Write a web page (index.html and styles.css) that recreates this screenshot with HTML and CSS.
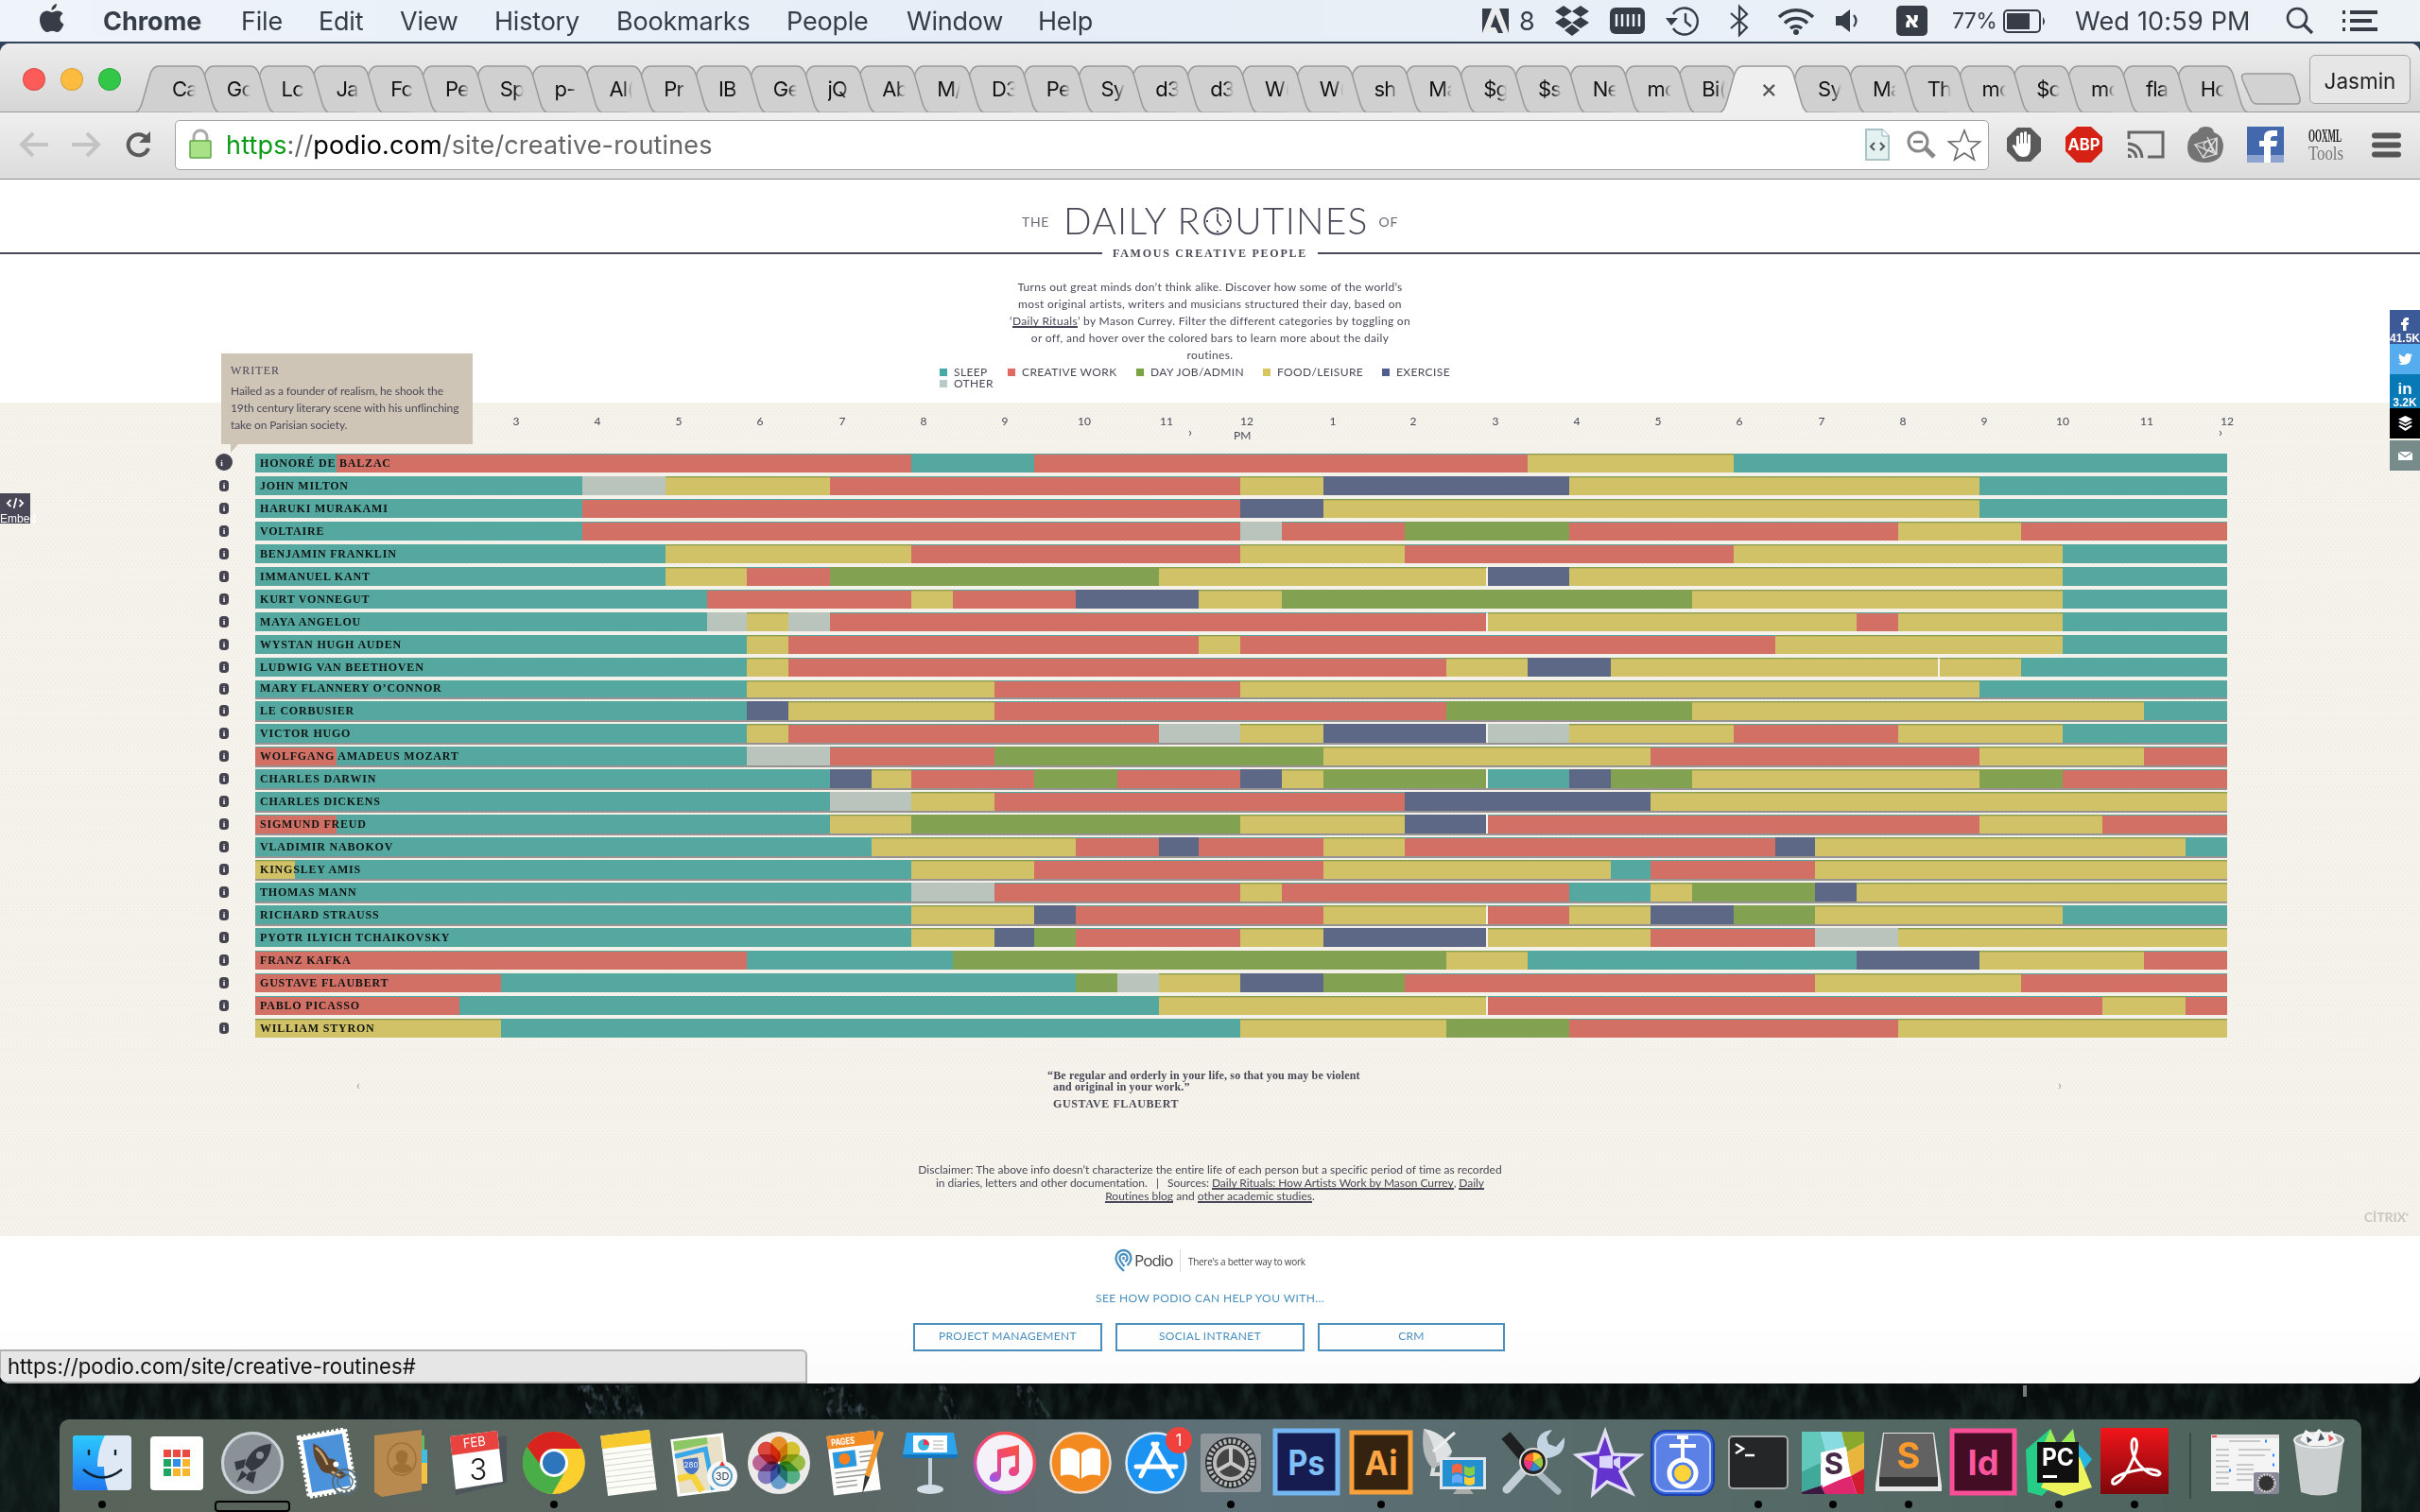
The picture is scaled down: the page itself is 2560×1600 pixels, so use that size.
FILE: index.html
```html
<!DOCTYPE html>
<html lang="en">
<head>
<meta charset="utf-8">
<title>The Daily Routines of Famous Creative People</title>
<link rel="stylesheet" href="styles.css">
</head>
<body>
<div class="desktop">
  <svg class="forest" viewBox="0 0 2560 136" preserveAspectRatio="none">
    <filter id="trees" x="0" y="0" width="100%" height="100%" color-interpolation-filters="sRGB"><feTurbulence type="fractalNoise" baseFrequency=".07 .03" numOctaves="4" seed="7"/><feColorMatrix values="0 0 0 0 .1  0 0 0 0 .16  0 0 0 0 .14  1.800 0 0 0 -.7"/></filter>
    <filter id="rocks" x="0" y="0" width="100%" height="100%" color-interpolation-filters="sRGB"><feTurbulence type="fractalNoise" baseFrequency=".16 .09" numOctaves="3" seed="3" result="n"/><feColorMatrix in="n" values="0 0 0 0 .28  0 0 0 0 .34  0 0 0 0 .38  2.500 0 0 0 -1.250" result="c"/><feComposite in="c" in2="SourceAlpha" operator="in"/></filter>
    <rect width="2560" height="136" filter="url(#trees)"/>
    <path d="M610 2h60l20 48-20 20h-30zM862 6l30-4 80 76h-70zM985 2h14l42 76h-14zM1070 2h20l50 76h-24z" filter="url(#rocks)"/>
    <path d="M2140 2h4v12h-4z" fill="#777b7c"/>
  </svg>
  <header class="menubar">
    <svg class="apple" viewBox="0 0 26 32"><path d="M18 0c.3 3-2.600 6.500-5.500 6.600C12 3.800 15 .5 18 0zM13 9c1.500 0 3.500-1.700 6-1.600 2.300.1 4.300 1.200 5.500 3-4.500 3-3.800 9 1 11-1.200 3.500-4 8.500-7 8.600-2 0-2.800-1.200-5.300-1.200S10 30 8 30C4 30 0 23 0 17c0-6 3.800-9.500 7.500-9.500C10 7.500 11.500 9 13 9z"/></svg>
    <nav class="menus"><b>Chrome</b><span>File</span><span>Edit</span><span>View</span><span>History</span><span>Bookmarks</span><span>People</span><span>Window</span><span>Help</span></nav>
    <div class="status">
      <svg width="28" height="26" viewBox="0 0 28 26"><path d="M0 0h28v26H0z"/><path d="M10 0h8l10 26h-6l-8-18-5 12h5l3 6H0z" fill="#fff" opacity=".9"/><path d="M14 6l7 20h-4l-2-6H9z"/></svg>
      <span class="s-num">8</span>
      <svg width="36" height="32" viewBox="0 0 36 32"><path d="M9 0l9 6-9 6-9-6zM27 0l9 6-9 6-9-6zM9 12l9 6-9 6-9-6zM27 12l9 6-9 6-9-6zM18 20l8 6-8 6-8-6z"/></svg>
      <svg width="37" height="28" viewBox="0 0 37 28"><rect width="37" height="28" rx="6"/><path d="M7 7v13M13 7v13M19 7v13M25 7v13M31 7v13" stroke="#e9eff6" stroke-width="2.500"/></svg>
      <svg width="38" height="32" viewBox="0 0 38 32"><path d="M8 9a14 14 0 1 1 0 15M21 8v9l6 5" fill="none" stroke="#363d47" stroke-width="2.400"/><path d="M0 13h13l-7 8z"/></svg>
      <svg width="20" height="32" viewBox="0 0 20 32"><path d="M1 8l17 15-8 8V1l8 8L1 24" fill="none" stroke="#363d47" stroke-width="2.200"/></svg>
      <svg width="40" height="29" viewBox="0 0 40 29"><g fill="none" stroke="#363d47" stroke-width="3.600"><path d="M2 10a26 26 0 0 1 36 0M8 16.500a17 17 0 0 1 24 0M14 22a9 9 0 0 1 12 0"/></g><circle cx="20" cy="26" r="3"/></svg>
      <svg width="26" height="26" viewBox="0 0 26 26"><path d="M0 8h6l9-7v24l-9-7H0z"/><path d="M19 7q5 6 0 12" fill="none" stroke="#363d47" stroke-width="2.200"/></svg>
      <span class="s-lang">א</span>
      <span class="s-pct">77%</span>
      <svg width="46" height="25" viewBox="0 0 46 25"><rect x="1" y="1" width="38" height="23" rx="4" fill="none" stroke="#363d47" stroke-width="2"/><rect x="4" y="4" width="24" height="17"/><path d="M42 8q4 4.500 0 9z"/></svg>
      <span class="s-time">Wed 10:59 PM</span>
      <svg width="30" height="30" viewBox="0 0 30 30"><circle cx="12" cy="12" r="10" fill="none" stroke="#363d47" stroke-width="2.600"/><path d="M19 19l9 9" stroke="#363d47" stroke-width="3.200"/></svg>
      <svg width="37" height="22" viewBox="0 0 37 22"><path d="M0 0h3v4H0zM8 0h29v4H8zM0 9h3v4H0zM8 9h23v4H8zM0 18h3v4H0zM8 18h29v4H8z"/></svg>
    </div>
  </header>

  <main class="window">
    <div class="titlebar">
      <i class="light red"></i><i class="light amber"></i><i class="light green"></i>
      <div class="tabs" id="tabs"></div>
      <svg class="newtab" viewBox="0 0 64 34"><path d="M6 1h44q5 0 7 5l6 21q1 6-4 6H18q-5 0-7-5L2 7q-2-6 4-6z" fill="#d2d2d3" stroke="#999" stroke-width="1.500"/></svg>
      <div class="profile">Jasmin</div>
    </div>
    <div class="toolbar">
      <svg class="nav-ic" viewBox="0 0 34 28"><path d="M16 2L4 14l12 12M5 14h27" fill="none" stroke="#c3c3c3" stroke-width="4"/></svg>
      <svg class="nav-ic" viewBox="0 0 34 28"><path d="M18 2l12 12-12 12M29 14H2" fill="none" stroke="#c3c3c3" stroke-width="4"/></svg>
      <svg class="nav-ic" viewBox="0 0 34 28"><path d="M25 7A11 11 0 1 0 27 18" fill="none" stroke="#5b5b5b" stroke-width="4"/><path d="M29 0v12H17z" fill="#5b5b5b"/></svg>
      <div class="omnibox">
        <svg class="lock" viewBox="0 0 24 32"><path d="M5 14V8a7 7 0 0 1 14 0v6" fill="none" stroke="#aaa" stroke-width="3"/><rect x="1" y="12" width="22" height="18" rx="1" fill="#a9e286" stroke="#5fa746" stroke-width="1.500"/></svg>
        <span class="url"><em>https</em>://<b>podio.com</b>/site/creative-routines</span>
        <svg class="o-page" viewBox="0 0 26 34"><path d="M1 1h17l7 7v25H1z" fill="#e3f1f1" stroke="#a9c4c6" stroke-width="2"/><path d="M18 1v7h7" fill="#fff" stroke="#8fb0b3"/><path d="M10 15l-4 4 4 4M16 15l4 4-4 4" fill="none" stroke="#555" stroke-width="2"/></svg>
        <svg class="o-zoom" viewBox="0 0 32 30"><circle cx="12" cy="12" r="10" fill="#fff" stroke="#888" stroke-width="3"/><path d="M7 12h10" stroke="#777" stroke-width="2.500"/><path d="M20 19l9 9" stroke="#888" stroke-width="5"/></svg>
        <svg class="o-star" viewBox="0 0 36 34"><path d="M18 2l4.500 11.500 12 .5-9.500 7.500 3.500 11.500L18 26 7.500 33 11 21.500 1.500 14l12-.5z" fill="#fff" stroke="#6b6b6b" stroke-width="1.600"/></svg>
      </div>
      <div class="exts">
        <svg width="36" height="36" viewBox="0 0 36 36"><path d="M11 0h14l11 11v14L25 36H11L0 25V11z" fill="#5a5a5a"/><path d="M10 20V9.500q1.500-2 3 0V17h1V6q1.500-2 3 0v10.500h1V5q1.500-2 3 0v11.500h1V8q1.500-2 3 0v14q-.5 9-7.500 9-5 0-8-5l-4-7q2-2 4.500 1z" fill="#fff"/></svg>
        <svg width="39" height="38" viewBox="0 0 39 38"><path d="M12 0h15l12 11v15L27 38H12L0 26V11z" fill="#d62115"/><text x="19.500" y="25" text-anchor="middle" font-size="17" font-weight="bold" fill="#fff" textLength="34" lengthAdjust="spacingAndGlyphs">ABP</text></svg>
        <svg width="40" height="30" viewBox="0 0 40 30"><path d="M2 9V2h36v26H22" fill="none" stroke="#666" stroke-width="3"/><path d="M1 14q14 1 15 15M1 20q8 1 9 9" fill="none" stroke="#666" stroke-width="3"/><path d="M1 25q4 0 4 4H1z" fill="#666"/></svg>
        <svg width="38" height="38" viewBox="0 0 38 38"><path d="M11 5q1-5 9-5 7 0 8 6 9 3 10 13 0 19-19 19T0 22Q0 9 11 5z" fill="#747474"/><g fill="none" stroke="#ddd" stroke-width="1.300"><path d="M31 12L8 19l22 10zM31 12L16 33M30 29l-9-18M22 15l-5 3 2 7 8 1z"/><path d="M31 12v17l-14 4-9-14"/></g></svg>
        <svg width="39" height="38" viewBox="0 0 39 38"><path d="M0 0h39v38H0z" fill="#4468ad"/><path d="M0 30h39v8H0z" fill="#8da3cf"/><path d="M18 38V21h-5v-6h5v-4q0-7 8-7h6v6h-4q-3 0-3 3v2h7l-1 6h-6v17z" fill="#fff"/></svg>
        <svg class="ooxml" width="37" height="34" viewBox="0 0 37 34"><text x="0" y="14" font-size="18" font-weight="bold" fill="#222" textLength="35" lengthAdjust="spacingAndGlyphs">OOXML</text><text x="0" y="33" font-size="21" fill="#777" textLength="37" lengthAdjust="spacingAndGlyphs">Tools</text></svg>
        <svg width="31" height="27" viewBox="0 0 31 27"><path d="M3 3.500h25M3 13.500h25M3 23.500h25" stroke="#555" stroke-width="6" stroke-linecap="round"/></svg>
      </div>
    </div>

    <div class="page">
      <section class="hero">
        <h1 class="title"><span class="small">THE</span><span class="big">DAILY R</span><svg viewBox="0 0 30 30"><circle cx="15" cy="15" r="13.800" fill="none" stroke="#4a4857" stroke-width="1.900"/><path d="M15 3v2M15 25v2M3 15h2M25 15h2M15 7v8l4 5" fill="none" stroke="#4a4857" stroke-width="1.800"/></svg><span class="big">UTINES</span><span class="small of">OF</span></h1>
        <div class="subtitle"><span>FAMOUS CREATIVE PEOPLE</span></div>
        <p class="intro">Turns out great minds don’t think alike. Discover how some of the world’s<br>most original artists, writers and musicians structured their day, based on<br>‘<u>Daily Rituals</u>’ by Mason Currey. Filter the different categories by toggling on<br>or off, and hover over the colored bars to learn more about the daily<br>routines.</p>
        <ul class="legend">
          <li><i class="T"></i>SLEEP</li><li><i class="R"></i>CREATIVE WORK</li><li><i class="G"></i>DAY JOB/ADMIN</li><li><i class="Y"></i>FOOD/LEISURE</li><li><i class="B"></i>EXERCISE</li><li><i class="O"></i>OTHER</li>
        </ul>
      </section>
      <section class="routines">
        <div class="hours" id="hours"></div>
        <div class="hours-2"><span>›</span><span>PM</span><span>›</span></div>
        <div class="chart" id="chart"></div>
        <div class="quote"><span class="chev">‹</span>
          <blockquote><span class="q1">“Be regular and orderly in your life, so that you may be violent</span><span class="q2">and original in your work.”</span><cite>GUSTAVE FLAUBERT</cite></blockquote>
          <span class="chev">›</span></div>
        <p class="disclaimer">Disclaimer: The above info doesn’t characterize the entire life of each person but a specific period of time as recorded<br><span class="d2">in diaries, letters and other documentation. &nbsp; | &nbsp; Sources: <u>Daily Rituals: How Artists Work by Mason Currey</u>, <u>Daily</u></span><br><u>Routines blog</u> and <u>other academic studies</u>.</p>
        <div class="citrix">CİTRIX<sup>•</sup></div>
      </section>
      <section class="podio">
        <div class="brand"><svg viewBox="0 0 19 24"><path d="M10 23Q1 15 1.500 9A8 8 0 0 1 17.500 9q0 4-4 8M10.500 18Q5 12 5.500 9a4 4 0 0 1 8 0q0 3-2.500 4M9.500 8v3" fill="none" stroke="#4a90c0" stroke-width="2.300"/></svg><b>Podio</b><span>There's a better way to work</span></div>
        <h2>SEE HOW PODIO CAN HELP YOU WITH...</h2>
        <div class="btns"><a>PROJECT MANAGEMENT</a><a>SOCIAL INTRANET</a><a>CRM</a></div>
      </section>
      <div class="tip"><h3>WRITER</h3><p>Hailed as a founder of realism, he shook the<br>19th century literary scene with his unflinching<br>take on Parisian society.</p></div>
      <div class="embed"><svg viewBox="0 0 20 12"><path d="M5 2L1 6l4 4M15 2l4 4-4 4M11.500 0l-3 12" fill="none" stroke="#fff" stroke-width="2"/></svg><span>Embed</span></div>
      <div class="social">
        <div class="fb"><svg width="9" height="14" viewBox="0 0 9 14"><path d="M2 14V8H0V5h2V4q0-4 4-4h2v3H7Q5.500 3 5.500 4v1H8L7.500 8h-2v6z" fill="#fff"/></svg>41.5K</div>
        <div class="tw"><svg width="15" height="12" viewBox="0 0 15 12"><path d="M0 10.500q3 0 4-1.200-2 0-2.800-2.300h1.200Q.5 6 .5 4l1.200.3Q0 2.500 1.200.6 4 3.500 7.300 3.500 7 0 10.300 0q1.200 0 2.200 1L14.500.3 13.500 2l1.500-.4L13.500 3.200Q13.500 12 5 12 2 12 0 10.500z" fill="#fff"/></svg></div>
        <div class="li"><b>in</b>3.2K</div>
        <div class="bf"><svg width="15" height="16" viewBox="0 0 15 16"><path d="M7.500 0L15 3.500 7.500 7.500 0 3.500zM0 7l2-1 5.500 3L13 6l2 1-7.500 4zM0 11l2-1 5.500 3L13 10l2 1-7.500 5z" fill="#fff"/></svg></div>
        <div class="ml"><svg width="15" height="9" viewBox="0 0 15 9"><path d="M0 0h15v9H0z" fill="#fff"/><path d="M0 0l7.500 5.500L15 0" fill="none" stroke="#768b8a" stroke-width="1.300"/></svg></div>
      </div>
      <div class="bubble">https://podio.com/site/creative-routines#</div>
    </div>
  </main>

  <footer class="dock">
    <div class="app run"><svg viewBox="0 0 80 80"><defs><linearGradient id="fin" x1="0" y1="0" x2="0" y2="1"><stop stop-color="#2bc9fd"/><stop offset="1" stop-color="#2177f0"/></linearGradient></defs><rect x="9" y="11" width="62" height="58" rx="4" fill="#dfe9f5"/><path d="M43 11H13q-4 0-4 4v50q0 4 4 4h33q-4-12-4-25h-7q0-18 8-33z" fill="url(#fin)"/><path d="M26 26v6M54 26v6M20 47q20 17 41 0" fill="none" stroke="#123" stroke-width="2.400"/></svg></div>
    <div class="app"><svg viewBox="0 0 80 80"><rect x="12" y="12" width="56" height="57" rx="4" fill="#fff"/><g><path fill="#e94b42" d="M26 26h8v8h-8zM36 26h8v8h-8zM46 26h8v8h-8z"/><path fill="#20a565" d="M26 36h8v8h-8zM26 46h8v8h-8z"/><path fill="#2f8fe8" d="M36 36h8v8h-8z"/><path fill="#f5b62e" d="M46 36h8v8h-8zM36 46h8v8h-8zM46 46h8v8h-8z"/></g></svg></div>
    <div class="app launch"><svg viewBox="0 0 80 80"><circle cx="40" cy="40" r="33" fill="#8b9297"/><circle cx="40" cy="40" r="31.500" fill="none" stroke="#c9d3d8" stroke-width="3"/><path d="M60 20q-21 1-28 22l7 7q20-9 21-29zM33 36l-12 3 2 9 8-3zM44 49l-3 13-8-5 3-7zM29 48l-6 13 12-8z" fill="#353a40"/><circle cx="48" cy="32" r="4" fill="#8b9297"/></svg></div>
    <div class="app"><svg viewBox="0 0 80 80"><g transform="rotate(-10 40 40)"><rect x="14" y="8" width="50" height="64" fill="#fff" stroke="#fff" stroke-width="4" stroke-dasharray="3 2"/><rect x="18" y="12" width="42" height="56" fill="#4b92da"/><path d="M28 17q10 6 14 19 5 0 9 7l-3 4 10 9-8 3-11-8q-8-2-9-9Q25 32 28 17z" fill="#5f432b"/><path d="M30 22q7 8 9 20M42 50l9 6" stroke="#c8a876" stroke-width="2.500" fill="none"/><circle cx="48" cy="43" r="3" fill="#fff"/></g><circle cx="58" cy="60" r="13" fill="none" stroke="#556b78" stroke-width="2"/><circle cx="58" cy="60" r="8" fill="none" stroke="#556b78" stroke-width="1.500"/></svg></div>
    <div class="app"><svg viewBox="0 0 80 80"><path d="M58 11h5v51h-5z" fill="#65b95d"/><path d="M59 26h7v14h-7z" fill="#41bde2"/><path d="M59 40h7v22h-7z" fill="#f5c344"/><path d="M10 11l50-6v64l-42 7-8-5z" fill="#b98a50"/><ellipse cx="39" cy="36" rx="15" ry="17" fill="none" stroke="#9d7136" stroke-width="1.500"/><path d="M29 47q1-5 7-6-4-4-3-11 6-7 12 0 1 7-3 11 6 1 8 6-11 8-21 0z" fill="#9d7136"/></svg></div>
    <div class="app"><svg viewBox="0 0 80 80"><path d="M14 20l56-9v50l-54 13z" fill="#4d555b"/><path d="M10 12l50-6 6 54-50 8z" fill="#fff"/><path d="M10 12l50-6 2 19-50 7z" fill="#e8433e"/><text x="36" y="23" font-size="14" fill="#fff" text-anchor="middle" transform="rotate(-7 36 20)" textLength="24" lengthAdjust="spacingAndGlyphs">FEB</text><text x="40" y="58" font-size="31" font-weight="300" fill="#222" text-anchor="middle">3</text></svg></div>
    <div class="app run"><svg viewBox="0 0 80 80"><circle cx="40" cy="40" r="33" fill="#fbcf2d"/><path d="M40 7a33 33 0 0 1 29.500 18H40L26 46 11.500 23A33 33 0 0 1 40 7z" fill="#d8231f"/><path d="M11.500 23A33 33 0 0 0 38 73l14-24-24-4z" fill="#4aae48"/><circle cx="40" cy="40" r="15" fill="#fff"/><circle cx="40" cy="40" r="12" fill="#2d75bd"/></svg></div>
    <div class="app"><svg viewBox="0 0 80 80"><g transform="rotate(-7 40 40)"><rect x="14" y="8" width="52" height="64" fill="#fdfdf8"/><path d="M14 8h52v14H14z" fill="#f6c92f"/><path d="M14 28h52M14 34h52M14 40h52M14 46h52M14 52h52M14 58h52M14 64h52" stroke="#d3d3ca"/></g></svg></div>
    <div class="app"><svg viewBox="0 0 80 80"><g transform="rotate(-7 36 40)"><rect x="9" y="13" width="53" height="58" fill="#e9e0c8" stroke="#fff" stroke-width="3"/><path d="M10 14h36v7L10 24z" fill="#8cc665"/><path d="M10 30l33-4 3 44" fill="none" stroke="#3ba7e6" stroke-width="5"/><path d="M10 54l16-2 8 18" fill="none" stroke="#f6d33c" stroke-width="7"/><path d="M18 34h16v9q-2 7-8 8-6-1-8-8z" fill="#4a76c8"/></g><text x="26" y="45" font-size="8" fill="#fff" text-anchor="middle">280</text><circle cx="59" cy="54" r="16" fill="#f7f7f7"/><circle cx="59" cy="54" r="10" fill="none" stroke="#5a9fc5" stroke-width="2"/><text x="59" y="58" font-size="11" text-anchor="middle" fill="#345">3D</text><path d="M56 43l3-5 3 5z" fill="#e33"/></svg></div>
    <div class="app"><svg viewBox="0 0 80 80"><circle cx="40" cy="40" r="33" fill="#ecebe9"/><g class="petals"><rect x="31" y="12" width="18" height="27" rx="9" fill="#f99b2b"/><rect x="31" y="12" width="18" height="27" rx="9" fill="#e4d335" transform="rotate(45 40 40)"/><rect x="31" y="12" width="18" height="27" rx="9" fill="#a3cc48" transform="rotate(90 40 40)"/><rect x="31" y="12" width="18" height="27" rx="9" fill="#5bbd91" transform="rotate(135 40 40)"/><rect x="31" y="12" width="18" height="27" rx="9" fill="#6ba9df" transform="rotate(180 40 40)"/><rect x="31" y="12" width="18" height="27" rx="9" fill="#8e83ce" transform="rotate(225 40 40)"/><rect x="31" y="12" width="18" height="27" rx="9" fill="#c96ba2" transform="rotate(270 40 40)"/><rect x="31" y="12" width="18" height="27" rx="9" fill="#ec4d43" transform="rotate(315 40 40)"/></g></svg></div>
    <div class="app"><svg viewBox="0 0 80 80"><g transform="rotate(-7 36 40)"><rect x="14" y="9" width="50" height="63" fill="#fdfdfb"/><path d="M14 9h50v14H14z" fill="#f08b25"/><rect x="18" y="27" width="24" height="17" fill="#2b98dd"/><circle cx="30" cy="35" r="6" fill="#f6801d"/><path d="M46 30h14M46 35h14M46 40h14M18 49h36M18 54h36M18 59h22M18 64h22" stroke="#999" stroke-width="1.500"/><text x="18" y="20" font-size="10" fill="#fff" font-weight="bold" textLength="25" lengthAdjust="spacingAndGlyphs">PAGES</text></g><path d="M65 6l6 2-15 47-5-2z" fill="#f29a30"/><path d="M56 55l-5-2-3 20z" fill="#333"/></svg></div>
    <div class="app"><svg viewBox="0 0 80 80"><path d="M38 34h4v32h-4z" fill="#c7d3dc"/><ellipse cx="40" cy="68" rx="14" ry="5" fill="#d2dde6"/><path d="M15 8h50l4 23H11z" fill="#2ba4ed"/><path d="M11 31h58v4H11z" fill="#1476bc"/><path d="M22 11h36v18H22z" fill="#fff"/><circle cx="33" cy="21" r="6" fill="#3fb6de"/><path d="M33 21v-6a6 6 0 0 1 6 6z" fill="#e35"/><path d="M43 17h11M43 21h11M43 25h11" stroke="#aaa"/></svg></div>
    <div class="app"><svg viewBox="0 0 80 80"><defs><linearGradient id="mus" x1="0" y1="1" x2=".6" y2="0"><stop stop-color="#8a5cf6"/><stop offset=".5" stop-color="#e8448a"/><stop offset="1" stop-color="#f8504c"/></linearGradient></defs><circle cx="40" cy="40" r="31.500" fill="#f5f1f8" stroke="url(#mus)" stroke-width="3.500"/><path d="M32 26l23-5v28q-1 5-6 5t-5-5q1-5 7-5V32l-15 3v19q-1 6-7 6t-5-5q1-5 8-6z" fill="url(#mus)"/></svg></div>
    <div class="app"><svg viewBox="0 0 80 80"><circle cx="40" cy="40" r="31.500" fill="#f38a20" stroke="#f3e2d2" stroke-width="2.500"/><path d="M39 30q-8-9-20-4v28q12-4 20 3zM41 30q8-9 20-4v28q-12-4-20 3z" fill="#fff"/></svg></div>
    <div class="app"><svg viewBox="0 0 80 80"><circle cx="40" cy="40" r="31.500" fill="#1b93f2" stroke="#dbeaf6" stroke-width="2.500"/><path d="M41 20L24 54M37 20l20 34M19 44h42" stroke="#fff" stroke-width="5" stroke-linecap="round"/><circle cx="64" cy="16" r="14" fill="#f0413c"/><text x="64" y="22" font-size="17" fill="#fff" text-anchor="middle">1</text></svg></div>
    <div class="app run"><svg viewBox="0 0 80 80"><rect x="8" y="9" width="64" height="62" rx="3" fill="#8f979c"/><circle cx="40" cy="40" r="27" fill="#292b2d"/><circle cx="40" cy="40" r="23" fill="none" stroke="#b4b6b7" stroke-width="5" stroke-dasharray="3 2"/><circle cx="40" cy="40" r="17" fill="#444" stroke="#bbb" stroke-width="4"/><path d="M40 40V24M40 40l14 8M40 40l-14 8" stroke="#c8c8c8" stroke-width="4"/></svg></div>
    <div class="app"><svg viewBox="0 0 80 80"><rect x="7" y="6" width="66" height="66" fill="#161b50" stroke="#72b7f1" stroke-width="5"/><text x="40" y="53" font-size="37" font-weight="bold" fill="#80c0f8" text-anchor="middle" textLength="39" lengthAdjust="spacingAndGlyphs">Ps</text></svg></div>
    <div class="app run"><svg viewBox="0 0 80 80"><rect x="9" y="8" width="62" height="63" fill="#36230f" stroke="#f8a13a" stroke-width="5"/><text x="40" y="53" font-size="36" font-weight="bold" fill="#fba545" text-anchor="middle" textLength="35" lengthAdjust="spacingAndGlyphs">Ai</text></svg></div>
    <div class="app"><svg viewBox="0 0 80 80"><path d="M22 34L11 29M16 42l-2 10h22" stroke="#ddd" stroke-width="4" fill="none"/><path d="M5 4q-4 30 10 42 18-8 20-18Q28 8 5 4z" fill="#b5b9b9"/><path d="M5 4q10 10 14 36 12-5 16-12Q28 8 5 4z" fill="#dfe2e2"/><path d="M15 28L38 8" stroke="#eee" stroke-width="3"/><path d="M22 34h49v34H22z" fill="#dfe5e8"/><path d="M25 37h43v28H25z" fill="#2490cf"/><path d="M35 43q6-5 11 0v9q-6-4-11 0z" fill="#e64"/><path d="M48 43q6 4 11 0v9q-6 4-11 0z" fill="#8c4"/><path d="M35 54q6-4 11 0v8q-6-3-11 0z" fill="#6af"/><path d="M48 54q6 4 11 0v8q-6 4-11 0z" fill="#fc3"/><path d="M40 68h14l4 5H36z" fill="#aaa"/></svg></div>
    <div class="app"><svg viewBox="0 0 80 80"><path d="M12 11l27 32" stroke="#1d1f21" stroke-width="12"/><path d="M38 43l29 27" stroke="#a9b8c1" stroke-width="7" stroke-linecap="round"/><path d="M13 68l34-37" stroke="#c2ced6" stroke-width="9" stroke-linecap="round"/><path d="M61 5q-16 2-16 16 0 12 9 14 8 0 15-5 6-6 5-17l-9 10-8-3-2-7z" fill="#c2d4e2"/><circle cx="41" cy="39" r="14" fill="#222" stroke="#ddd" stroke-width="2"/><path d="M41 39V29a10 10 0 0 1 9 5z" fill="#fc3"/><path d="M41 39l9-5q3 7-1 12z" fill="#9c4"/><path d="M41 39l8 7q-5 4-12 2z" fill="#38c"/><path d="M41 39l-4 9q-7-4-6-11z" fill="#e38"/><path d="M41 39l-10-2q2-7 10-8z" fill="#f63"/></svg></div>
    <div class="app"><svg viewBox="0 0 80 80"><path d="M38 7l8 24 29 1-21 17 12 23-26-12-15 13 3-26L8 32l22-3z" fill="#6534cf" stroke="#e2def5" stroke-width="3.500"/><path d="M32 33l14-1v14l-14-1zM47 37l7-4v14l-7-5z" fill="#dad7fa"/></svg></div>
    <div class="app"><svg viewBox="0 0 80 80"><rect x="7" y="6" width="66" height="68" rx="15" fill="#3565db" stroke="#1d3fae" stroke-width="2"/><rect x="11" y="10" width="58" height="60" rx="12" fill="#5b80e6" stroke="#b7cbfa" stroke-width="2"/><circle cx="40" cy="51" r="14" fill="#4d7df0" stroke="#fff" stroke-width="5"/><circle cx="40" cy="51" r="9" fill="#fcd43a"/><path d="M40 12v25M26 22h28M34 13h12" stroke="#fff" stroke-width="4"/></svg></div>
    <div class="app run"><svg viewBox="0 0 80 80"><rect x="9" y="12" width="62" height="55" rx="4" fill="#252627" stroke="#a9a9a9" stroke-width="2"/><path d="M16 20l8 5-8 5M26 32h10" fill="none" stroke="#fff" stroke-width="2.500"/></svg></div>
    <div class="app run"><svg viewBox="0 0 80 80"><rect x="7" y="7" width="66" height="66" rx="5" fill="#fff"/><path d="M7 7h20l8 30-28 12z" fill="#62c8bb"/><path d="M27 7h22l5 22-19 8z" fill="#88dbe0"/><path d="M49 7h24v12l-19 10z" fill="#8aa82c"/><path d="M73 19v27l-14 8-5-25z" fill="#eab53c"/><path d="M73 46v27h-8l-6-19z" fill="#d01c31"/><path d="M59 54l6 19H32l-5-9z" fill="#df2770"/><path d="M27 64l5 9H7v-3z" fill="#3b1942"/><path d="M7 49l20-9v24L7 71z" fill="#3fa99a"/><path d="M27 29l27-6 4 30-29 13z" fill="#fff"/><text x="41" y="52" font-size="31" font-weight="bold" fill="#472a48" text-anchor="middle">S</text></svg></div>
    <div class="app run"><svg viewBox="0 0 80 80"><path d="M13 8h54l8 56v6H5v-6z" fill="#e7e7e7"/><path d="M14 9h52l5 46H9z" fill="#626262"/><path d="M9 55h62v10H9z" fill="#333"/><text x="40" y="46" font-size="38" font-weight="bold" fill="#fb9a2c" text-anchor="middle">S</text></svg></div>
    <div class="app"><svg viewBox="0 0 80 80"><rect x="7" y="6" width="66" height="66" fill="#430e23" stroke="#fa4f98" stroke-width="5"/><text x="40" y="53" font-size="37" font-weight="bold" fill="#fb579f" text-anchor="middle" textLength="33" lengthAdjust="spacingAndGlyphs">Id</text></svg></div>
    <div class="app run"><svg viewBox="0 0 80 80"><path d="M31 4L5 26l2 45 15 4 14-14z" fill="#25cd86"/><path d="M31 4l8 18 16-18 5 30-40-4z" fill="#9cec58"/><path d="M60 19l15 17-13 17-22-29z" fill="#26b5df"/><path d="M62 34l13 32-30 9-24-9 15-31z" fill="#eef45c"/><path d="M17 18h44v43H17z" fill="#101010"/><text x="39" y="43" font-size="25" font-weight="bold" fill="#fff" text-anchor="middle" textLength="34" lengthAdjust="spacingAndGlyphs">PC</text><path d="M23 53h15v3H23z" fill="#fff"/></svg></div>
    <div class="app run"><svg viewBox="0 0 80 80"><defs><linearGradient id="acr" x1="0" y1="0" x2="0" y2="1"><stop stop-color="#f1151a"/><stop offset="1" stop-color="#7d070b"/></linearGradient></defs><rect x="4" y="3" width="72" height="70" fill="url(#acr)"/><path d="M20 62q-5 1-3-4 4-5 20-9 16-4 26-1 7 3 2 5-9 1-20-11-9-11-8-23 1-6 4-4 4 6-3 22-8 20-18 25z" fill="none" stroke="#fff" stroke-width="3"/></svg></div>
    <i class="sep"></i>
    <div class="app last"><svg viewBox="0 0 80 80"><rect x="5" y="10" width="72" height="60" fill="#f4f4f4"/><path d="M5 10h72v4H5z" fill="#ddd"/><path d="M6 12h5" stroke="#e55" stroke-width="2"/><path d="M24 17h33M10 26h14M10 32h14M10 38h14M10 44h14M10 50h14M10 56h14M10 62h14M34 26h34M34 32h28M32 42h18M32 47h18M32 52h18M32 58h16" stroke="#bbb" stroke-width="1.500"/><path d="M62 17h2M70 32h2M70 42h2M24 48h2" stroke="#38f" stroke-width="3"/><rect x="50" y="50" width="27" height="23" rx="2" fill="#889"/><circle cx="63.500" cy="61.500" r="9" fill="#333" stroke="#ccc" stroke-width="2.500" stroke-dasharray="2 1"/></svg></div>
    <div class="app"><svg viewBox="0 0 80 80"><path d="M14 17h52l-7 54q-19 7-38 0z" fill="#d3d5d6" opacity=".95"/><ellipse cx="40" cy="16" rx="26" ry="8" fill="#afb5b7" stroke="#eee" stroke-width="2"/><path d="M20 16l6-11 8 5 6-6 7 6 7-4 6 11-11 5H30z" fill="#f4f4f4"/><path d="M27 12l6 4-5 3zM42 8l4 7-7 2z" fill="#456"/><path d="M50 10l6 4-5 4z" fill="#d55"/></svg></div>
  </footer>
</div>
<script src="app.js"></script>
</body>
</html>
```
FILE: styles.css
```css
* { box-sizing: border-box; }
body { margin: 0; font-family: "Inter", "Liberation Sans", sans-serif; }
svg { display: block; overflow: visible; flex: none; }
h1, h2, h3, p, ul, blockquote { margin: 0; padding: 0; font-weight: normal; }
u { text-decoration: none; border-bottom: 2px solid #4a4857; display: inline-block; line-height: 11px; }

.desktop {
  width: 2560px; height: 1600px; overflow: hidden; display: flex; flex-direction: column; position: relative;
  background: linear-gradient(#31435a 0 60px, #060a0b 1464px, #0e1817 1540px);
}
.forest { position: absolute; left: 0; bottom: 0; width: 2560px; height: 136px; overflow: hidden; }

/* Menu bar */
.menubar { height: 44px; flex: none; background: linear-gradient(90deg, #eef4f9, #e6edf6 40%, #edf2f7); display: flex; align-items: center; font-size: 27px; color: #363d47; fill: #363d47; white-space: nowrap; position: relative; }
.apple { width: 26px; height: 32px; margin: -4px 0 0 42px; }
.menus { margin-left: 41px; width: 1069px; display: grid; grid-template-columns: 146px 82px 86px 100px 129px 180px 127px 139px 80px; letter-spacing: -.2px; }
.menus b { letter-spacing: 0; }
.status { margin-left: 390px; display: flex; align-items: center; }
.status > * { margin-right: 22px; flex: none; }
.status > :nth-child(1) { margin-right: 11px; }
.status > :nth-child(2) { margin-right: 20px; }
.status > :nth-child(5), .status > :nth-child(6), .status > :nth-child(11), .status > :nth-child(13) { margin-right: 30px; }
.status > :nth-child(8) { margin-right: 38px; }
.status .s-num { width: 18px; }
.status .s-lang { width: 33px; height: 32px; border-radius: 5px; margin-right: 26px; background: #363d47; color: #fff; text-align: center; font: bold 24px/31px "DejaVu Sans", sans-serif; }
.status .s-pct { font-size: 23px; width: 47px; margin-right: 7px; letter-spacing: -.6px; }
.status .s-time { width: 187px; margin-right: 36px; letter-spacing: .2px; }

/* Window chrome */
.window { margin-top: 2px; height: 1418px; flex: none; display: flex; flex-direction: column; border-radius: 10px; overflow: hidden; background: #fff; position: relative; }
.titlebar { height: 73px; flex: none; background: linear-gradient(#ececec, #d6d6d6); border-bottom: 1px solid #999; display: flex; padding: 0 10px 0 24px; }
.light { width: 24px; height: 24px; border-radius: 50%; margin: 26px 16px 0 0; flex: none; border: 1px solid rgba(0,0,0,.15); }
.light.red { background: #fc5b57; }
.light.amber { background: #fdbc40; }
.light.green { background: #33c748; }
.tabs { display: flex; margin: 23px 0 0 0; width: 2225px; flex: none; }
.tab { width: 57.800px; height: 50px; flex: none; position: relative; display: flex; }
.tab.active { width: 65px; }
.tab svg { width: 88px; height: 50px; margin-right: -88px; }
.tab span { position: relative; margin: 8px 0 0 38px; width: 25px; flex: none; white-space: nowrap; font-size: 22px; letter-spacing: -.8px; line-height: 34px; color: #111; -webkit-mask-image: linear-gradient(90deg, #000 60%, transparent); mask-image: linear-gradient(90deg, #000 60%, transparent); }
.tab.active span { margin-left: 42px; color: #555; font-size: 28px; line-height: 33px; -webkit-mask-image: none; mask-image: none; }
.newtab { width: 64px; height: 34px; margin: 31px 0 0 1px; }
.profile { width: 108px; height: 52px; margin: 12px 0 0 9px; border: 1px solid #a5a5a5; border-radius: 6px; background: #e6e6e6; font-size: 22.500px; line-height: 54px; text-align: center; color: #222; }
.toolbar { height: 71px; flex: none; background: linear-gradient(#efefef, #dcdcdc); border-bottom: 1px solid #8d8d8d; display: flex; align-items: center; padding: 0 19px 2px 19px; }
.nav-ic { width: 34px; height: 28px; margin-right: 21px; }
.nav-ic:nth-child(2) { margin-right: 22px; }
.omnibox { width: 1919px; height: 53px; background: #fff; border: 1px solid #a3a3a3; border-radius: 5px; display: flex; align-items: center; padding-left: 14px; flex: none; }
.lock { width: 24px; height: 32px; }
.url { margin-left: 15px; flex: 1; font-size: 27px; color: #666; letter-spacing: .16px; }
.url em { font-style: normal; color: #0a9a16; }
.url b { font-weight: normal; color: #000; }
.o-page { width: 26px; height: 34px; margin-right: 18px; }
.o-zoom { width: 32px; height: 30px; margin-right: 11px; }
.o-star { width: 36px; height: 34px; margin-right: 7px; }
.exts { flex: 1; display: flex; align-items: center; padding-left: 19px; gap: 26px; }
.exts svg:nth-child(4) { margin: 0 -2px 0 -2px; }
.exts svg:nth-child(5) { margin-left: 1px; }
.exts svg:nth-child(6) { margin-right: 4px; }
.ooxml { font-family: "Liberation Serif", serif; }

/* Page */
.page { height: 1274px; position: relative; color: #4a4857; font-family: "Lato", "Liberation Sans", sans-serif; }
.hero { height: 236px; display: flex; flex-direction: column; align-items: center; }
.title { display: flex; align-items: center; height: 58px; margin-top: 14px; white-space: nowrap; }
.title svg { width: 30px; height: 30px; margin: 1px 3px 0 3px; }
.big { font-size: 39px; font-weight: 300; line-height: 58px; letter-spacing: 1.200px; }
.small { font-size: 14px; font-weight: 400; letter-spacing: .7px; margin: 3px 15px 0 0; color: #6b6976; }
.small.of { margin: 3px 0 0 11px; }
.subtitle { width: 100%; display: flex; align-items: center; height: 14px; margin-top: -1px; font-family: "Liberation Serif", serif; font-size: 12px; font-weight: bold; letter-spacing: 1.750px; }
.subtitle span { width: 228px; text-align: center; white-space: nowrap; }
.subtitle::before, .subtitle::after { content: ""; height: 2px; flex: 1; background: #4a4857; }
.intro { margin-top: 20px; text-align: center; font-size: 12px; line-height: 18px; white-space: nowrap; letter-spacing: .32px; }
.legend { list-style: none; display: grid; grid-template-columns: 72px 136px 134px 126px 104px; margin: 3px 0 0 0; width: 572px; font-size: 12px; line-height: 12px; letter-spacing: .38px; }
.legend li { display: flex; align-items: center; white-space: nowrap; }
.legend i { width: 8px; height: 8px; margin-right: 7px; }
.legend .T { background: #46a9a6; } .legend .R { background: #df6a62; } .legend .G { background: #7ba243; }
.legend .Y { background: #d8c65f; } .legend .B { background: #525f8e; } .legend .O { background: #b9caca; }

.routines { height: 882px; background: radial-gradient(circle, rgba(120,110,80,.03) 1px, transparent 1.500px) 0 0 / 4px 6px, radial-gradient(circle, rgba(120,110,80,.03) 1px, transparent 1.500px) 2px 3px / 4px 6px, #f5f3eb; padding-left: 232px; }
.hours { margin-left: 314px; padding-top: 12px; height: 29px; display: grid; grid-template-columns: 86px 86px 86px 87px 86px 86px 84px 87px 85px 91px 85px 87px 86px 86px 86px 87px 86px 86px 83px 89px 85px 0; font-size: 12px; line-height: 16px; }
.hours span { width: 0; display: flex; justify-content: center; }
.hours-2 { margin-left: 1025px; height: 25px; font-size: 12px; line-height: 10px; display: grid; grid-template-columns: 48px 1042px 20px; }
.hours-2 span { margin-top: -3px; font-size: 14px; }
.hours-2 span:nth-child(2) { margin-top: 0; padding-top: 1px; font-size: 12px; }
.row { height: 20px; margin-bottom: 4px; display: flex; align-items: center; position: relative; }
.row .info { width: 10px; height: 12px; border-radius: 4px; background: #45434f; margin-right: 28px; color: #fff; font: bold 9px/12px "Liberation Serif", serif; text-align: center; flex: none; }
.row:first-child .info { width: 18px; height: 18px; border-radius: 9px; margin: -2px 24px 0 -4px; line-height: 20px; padding-right: 5px; }
.bars { height: 20px; display: flex; flex: none; position: relative; }
.row.short { height: 18px; }
.row.short .bars, .row.short .bars i { height: 18px; }
.row.lined .bars { box-shadow: 0 2px #969392; }
.bars i { height: 20px; flex: none; }
.bars .T { background: #54a8a0; } .bars .R { background: #d37066; border-top: 1px solid #54a8a0; }
.bars .Y { background: #d2c267; border-top: 1px solid #82a151; box-shadow: inset 0 1px #bdb25b; }
.bars .G { background: #82a151; } .bars .B { background: #5d6887; } .bars .O { background: #b9c5bc; }
.bars .gap { border-right: 2px solid #f5f2ea; }
.name { position: absolute; left: 5px; top: 0; line-height: 20px; font-family: "Liberation Serif", serif; font-weight: bold; font-size: 12px; letter-spacing: .8px; color: #101513; white-space: nowrap; }
.row.short .name { line-height: 17px; }

.quote { height: 52px; display: flex; margin-top: 30px; font-family: "Liberation Serif", serif; font-size: 12px; line-height: 12px; white-space: nowrap; }
.quote .chev { font: 14px/12px "Lato", sans-serif; color: #999; margin-top: 14px; }
.quote .chev:first-child { width: 731px; padding-left: 145px; }
.quote blockquote { width: 1214px; padding-top: 4px; font-weight: bold; letter-spacing: .14px; }
.quote blockquote > * { display: block; margin-left: 145px; padding-left: 6px; font-style: normal; }
.quote blockquote .q1 { padding-left: 0; }
.quote cite { margin-top: 6px; letter-spacing: .6px; }
.disclaimer { margin: 50px 0 0 -232px; padding-top: 1px; height: 42px; text-align: center; font-size: 12px; line-height: 14px; letter-spacing: .02px; white-space: nowrap; }
.disclaimer .d2 { letter-spacing: -.04px; }
.citrix { text-align: right; margin-right: 12px; font: bold 14px/20px "Lato", sans-serif; color: #c9c6bf; margin-top: 3px; }
.citrix sup { font-size: 5px; }

.podio { height: 156px; background: linear-gradient(#fff 60%, #fafafa); display: flex; flex-direction: column; align-items: center; }
.brand { display: flex; align-items: center; height: 24px; margin-top: 14px; width: 202px; font-family: "Open Sans", sans-serif; white-space: nowrap; color: #444; }
.brand svg { width: 19px; height: 24px; }
.brand b { font-weight: normal; font-size: 17px; letter-spacing: -1px; width: 51px; padding-left: 2px; line-height: 24px; border-right: 1px solid #ddd; }
.brand span { font-size: 10px; padding: 1px 0 0 8px; letter-spacing: -.3px; }
.podio h2 { font-size: 12px; color: #4a8fbd; line-height: 16px; margin-top: 20px; letter-spacing: .4px; }
.btns { display: flex; gap: 14px; margin: 18px 2px 0 0; }
.btns a { width: 200px; height: 30px; border: 2px solid #4a8fbd; color: #4a8fbd; font-size: 12px; line-height: 24px; text-align: center; letter-spacing: .35px; }
.btns a:last-child { width: 198px; }

/* Overlays */
.tip { position: absolute; left: 234px; top: 184px; width: 266px; height: 96px; background: #cfc5b6; padding: 10px; white-space: nowrap; }
.tip::after { content: ""; position: absolute; left: 10px; top: 96px; border-top: 9px solid #cfc5b6; border-right: 8px solid transparent; }
.tip h3 { font: 12px/16px "Liberation Serif", serif; letter-spacing: 1px; }
.tip p { font-size: 12px; line-height: 18px; margin-top: 5px; letter-spacing: -.1px; }
.embed { position: absolute; left: 0; top: 332px; width: 32px; height: 32px; padding-top: 5px; background: #4a4857; color: #fff; font: 12px/12px "Liberation Sans", sans-serif; }
.embed svg { width: 18px; height: 11px; margin: 0 0 5px 7px; }
.social { position: absolute; right: 0; top: 138px; width: 32px; color: #fff; font: bold 12px/11px "Liberation Sans", sans-serif; }
.social div { height: 32px; display: flex; flex-direction: column; align-items: center; justify-content: center; }
.social .fb, .social .li { height: 36px; justify-content: flex-end; overflow: hidden; }
.social .fb { background: #3d5a98; } .social .fb svg { margin-bottom: 3px; }
.social .tw { background: #55acee; }
.social .li { background: #0679b6; } .social .li b { font-size: 17px; line-height: 14px; margin-bottom: 2px; }
.social .bf { background: #000; margin-bottom: 2px; }
.social .ml { background: #768b8a; }
.bubble { position: absolute; left: 0; bottom: 0; width: 854px; height: 36px; background: #e6e6e6; border: 2px solid #b0b0b0; border-left-width: 1px; border-top-right-radius: 6px; font: 22.200px/31px "Inter", sans-serif; color: #111; padding-left: 7px; }

/* Dock */
.dock { width: 2435px; height: 98px; margin: 38px 0 0 63px; flex: none; border-radius: 10px 10px 0 0; background: linear-gradient(90deg, #586459, #5b6765 35%, #5d7078 50%, #566a68 70%, #4d625a); display: flex; padding: 6px 0 0 5px; position: relative; }
.app { width: 79.630px; height: 92px; flex: none; display: flex; flex-direction: column; align-items: center; }
.app svg { width: 80px; height: 80px; font-family: "Inter", sans-serif; }
.app.run::after { content: ""; width: 8px; height: 8px; border-radius: 4px; background: #000; }
.app.launch::after { content: ""; width: 76px; height: 8px; border-radius: 4px; border: 2px solid #000; }
.petals rect { mix-blend-mode: multiply; }
.sep { width: 2px; height: 70px; background: #3a4b48; margin: 8px 17px 0 18px; flex: none; }
.app.last { margin-right: -1px; }
```
FILE: app.js
```js
const tabNames = ['Ca','Gc','Lc','Ja','Fc','Pe','Sp','p-','Al(','Pr','IB','Ge','jQ','Ab','M/','D3','Pe','Sy','d3','d3','W(','W(','sh','Ma','$g','$s','Ne','mc','Bi(','×','Sy','Ma','Th','mc','$c','mc','fla','Hc'];
const activeTab = 29;
document.getElementById('tabs').innerHTML = tabNames.map((name, i) => {
  const active = i === activeTab;
  const fill = active ? '#efefef' : '#d0d0d1';
  const w = active ? 92 : 87;
  const shape = `M0 49.500q4-1 7-12L15 9q3-8 9-8h${w - 48}q6 0 9 8l8 28.500q3 11 7 12`;
  return `<div class="tab${active ? ' active' : ''}" style="z-index:${active ? 99 : 60 - i}"><svg viewBox="0 0 88 50"><path d="${shape}" fill="${fill}" stroke="#999" stroke-width="1.500"/>${active ? '<path d="M2 49h88v3H2z" fill="#efefef"/>' : ''}</svg><span>${name}</span></div>`;
}).join('');

document.getElementById('hours').innerHTML =
  [3,4,5,6,7,8,9,10,11,12,1,2,3,4,5,6,7,8,9,10,11,12].map(h => `<span>${h}</span>`).join('');

// Each entry: category letter and the half hour (0-48) at which that block ends.
const people = [
  ['HONORÉ DE BALZAC', 'T2 R16 T19 R31 Y36 T48'],
  ['JOHN MILTON', 'T8 O10 Y14 R24 Y26 B32 Y42 T48'],
  ['HARUKI MURAKAMI', 'T8 R24 B26 Y42 T48'],
  ['VOLTAIRE', 'T8 R24 O25 R28 G32 R40 Y43 R48'],
  ['BENJAMIN FRANKLIN', 'T10 Y16 R24 Y28 R36 Y44 T48'],
  ['IMMANUEL KANT', 'T10 Y12 R14 G22 Y30 B32 Y44 T48'],
  ['KURT VONNEGUT', 'T11 R16 Y17 R20 B23 Y25 G35 Y44 T48'],
  ['MAYA ANGELOU', 'T11 O12 Y13 O14 R30 Y39 R40 Y44 T48'],
  ['WYSTAN HUGH AUDEN', 'T12 Y13 R23 Y24 R37 Y44 T48'],
  ['LUDWIG VAN BEETHOVEN', 'T12 Y13 R29 Y31 B33 Y41 Y43 T48'],
  ['MARY FLANNERY O’CONNOR', 'T12 Y18 R24 Y42 T48'],
  ['LE CORBUSIER', 'T12 B13 Y18 R29 G35 Y46 T48'],
  ['VICTOR HUGO', 'T12 Y13 R22 O24 Y26 B30 O32 Y36 R40 Y44 T48'],
  ['WOLFGANG AMADEUS MOZART', 'R2 T12 O14 R18 G26 Y34 R42 Y46 R48'],
  ['CHARLES DARWIN', 'T14 B15 Y16 R19 G21 R24 B25 Y26 G30 T32 B33 G35 Y42 G44 R48'],
  ['CHARLES DICKENS', 'T14 O16 Y18 R28 B34 Y48'],
  ['SIGMUND FREUD', 'R2 T14 Y16 G24 Y28 B30 R42 Y45 R48'],
  ['VLADIMIR NABOKOV', 'T15 Y20 R22 B23 R26 Y28 R37 B38 Y47 T48'],
  ['KINGSLEY AMIS', 'Y1 T16 Y19 R26 Y33 T34 R38 Y48'],
  ['THOMAS MANN', 'T16 O18 R24 Y25 R32 T34 Y35 G38 B39 Y48'],
  ['RICHARD STRAUSS', 'T16 Y19 B20 R26 Y30 R32 Y34 B36 G38 Y44 T48'],
  ['PYOTR ILYICH TCHAIKOVSKY', 'T16 Y18 B19 G20 R24 Y26 B30 Y34 R38 O40 Y48'],
  ['FRANZ KAFKA', 'R12 T17 G29 Y31 T39 B42 Y46 R48'],
  ['GUSTAVE FLAUBERT', 'R6 T20 G21 O22 Y24 B26 G28 R38 Y43 R48'],
  ['PABLO PICASSO', 'R5 T22 Y30 R45 Y47 R48'],
  ['WILLIAM STYRON', 'Y6 T24 Y29 G32 R40 Y48']
];
// A divider two pixels wide closes the blocks that end at these marks.
const isGap = n => n === 30 || n === 41;
const edge = n => 2 * Math.floor((270 + n * 43.46 + 0.1) / 2) + (isGap(n) ? 2 : 0);
document.getElementById('chart').innerHTML = people.map(([name, spec], i) => {
  let from = 0;
  const bars = spec.split(' ').map(s => {
    const to = +s.slice(1);
    const width = edge(to) - edge(from);
    from = to;
    return `<i class="${s[0]}${isGap(to) ? ' gap' : ''}" style="width:${width}px"></i>`;
  }).join('');
  const cls = (i === 10 ? ' short' : '') + (i >= 10 && i <= 20 ? ' lined' : '');
  return `<div class="row${cls}"><span class="info">i</span><div class="bars">${bars}<span class="name">${name}</span></div></div>`;
}).join('');
```
